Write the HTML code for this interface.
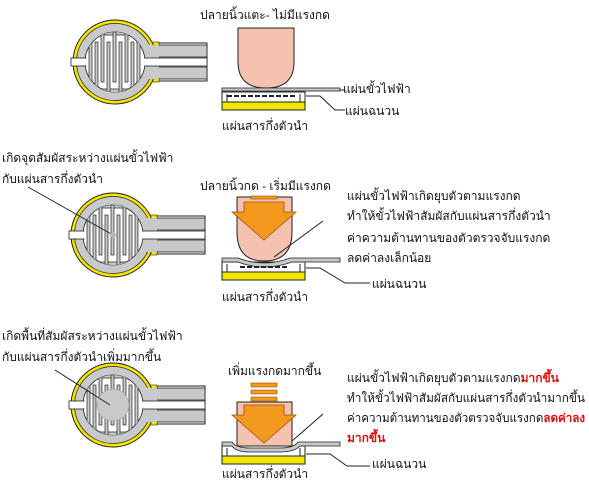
<!DOCTYPE html>
<html><head><meta charset="utf-8"><style>
body{margin:0;background:#fff;width:589px;height:480px;overflow:hidden}
text{font-family:"Liberation Sans","DejaVu Sans",sans-serif;font-size:12px;fill:#111}
</style></head><body>
<svg width="589" height="480" viewBox="0 0 589 480">
<defs>
<clipPath id="ic"><circle cx="0" cy="0" r="30"/></clipPath>
<g id="sensor">
  <rect x="20" y="-19" width="72" height="38" fill="#fff" stroke="#222" stroke-width="1"/>
  <rect x="20" y="-17" width="72" height="12" fill="#c8c9cb" stroke="#222" stroke-width=".8"/>
  <rect x="20" y="5" width="72" height="12" fill="#c8c9cb" stroke="#222" stroke-width=".8"/>
  <rect x="20" y="-20" width="24" height="4" fill="#f2e600" stroke="#222" stroke-width=".6"/>
  <rect x="20" y="16" width="24" height="4" fill="#f2e600" stroke="#222" stroke-width=".6"/>
  <circle r="42" fill="#f2e600" stroke="#222" stroke-width="1"/>
  <circle r="38.5" fill="#c8c9cb" stroke="#222" stroke-width=".8"/>
  <rect x="30" y="-17" width="14" height="34" fill="#c8c9cb"/>
  <circle r="30" fill="#fff" stroke="#222" stroke-width=".8"/>
  <g clip-path="url(#ic)" fill="#c8c9cb" stroke="#222" stroke-width=".7">
    <path d="M-32,-32 H32 V-27 H-32Z"/>
    <path d="M-32,32 H32 V27 H-32Z"/>
    <rect x="-26" y="-30" width="3" height="50"/>
    <rect x="-20" y="-20" width="3" height="50"/>
    <rect x="-14" y="-30" width="3" height="50"/>
    <rect x="-8" y="-20" width="3" height="50"/>
    <rect x="-2" y="-30" width="3" height="50"/>
    <rect x="4" y="-20" width="3" height="50"/>
    <rect x="10" y="-30" width="3" height="50"/>
    <rect x="16" y="-20" width="3" height="50"/>
    <rect x="22" y="-30" width="3" height="50"/>
  </g>
  <rect x="-44" y="-4" width="15" height="8" fill="#fff" stroke="#222" stroke-width=".8"/>
  <rect x="-30" y="-3.4" width="3" height="6.8" fill="#fff"/>
  <rect x="30" y="-4" width="62" height="8" fill="#fff" stroke="#222" stroke-width=".8"/>
  <rect x="28" y="-3.4" width="5" height="6.8" fill="#fff"/>
</g>
<g id="base">
  <rect x="0" y="4" width="83" height="10" fill="#fff" stroke="#222"/>
  <path d="M5,14 V6 M78,14 V6" stroke="#222"/>
  <rect x="0" y="14" width="83" height="8" fill="#f2e600" stroke="#222"/>
</g>
<g id="arrow">
  <path d="M-20,0 H20 V10 H32 L0,38 L-32,10 H-20Z" fill="#f39a1e" stroke="#9a5200" stroke-width=".8"/>
</g>
</defs>

<!-- Row 1 -->
<use href="#sensor" x="115" y="62"/>
<text x="200" y="19">ปลายนิ้วแตะ- ไม่มีแรงกด</text>
<path d="M238,28 H294 V62 Q294,88 266,88 Q238,88 238,62Z" fill="#f6c2b0" stroke="#222"/>
<use href="#base" x="222" y="88"/>
<rect x="222" y="88" width="118" height="3" fill="#c8c9cb" stroke="#222" stroke-width=".8"/>
<path d="M227,96 h70" stroke="#222" stroke-dasharray="5,2" stroke-width="2"/>
<path d="M340,90 H345" stroke="#222"/>
<text x="343" y="93">แผ่นขั้วไฟฟ้า</text>
<path d="M306,96 H320 L335,110 H345" stroke="#222" fill="none"/>
<text x="345" y="115">แผ่นฉนวน</text>
<text x="222" y="130">แผ่นสารกึ่งตัวนำ</text>

<!-- Row 2 -->
<text x="2" y="162">เกิดจุดสัมผัสระหว่างแผ่นขั้วไฟฟ้า</text>
<text x="2" y="183">กับแผ่นสารกึ่งตัวนำ</text>
<use href="#sensor" x="113" y="235"/>
<path d="M28,187 L113,235" stroke="#222"/>
<circle cx="113" cy="235" r="3" fill="#b5b6b8"/>
<text x="200" y="190">ปลายนิ้วกด - เริ่มมีแรงกด</text>
<path d="M237,197 H292 V232 Q292,261 264,261 Q237,261 237,232Z" fill="#f6c2b0" stroke="#222"/>
<rect x="251" y="196" width="26" height="3" fill="#f39a1e" stroke="#9a5200" stroke-width=".6"/>
<use href="#arrow" x="264" y="202"/>
<use href="#base" x="222" y="258"/>
<path d="M222,258 H238 Q264,268 290,258 H340 V262 H292 Q264,272 238,262 H222Z" fill="#c8c9cb" stroke="#222" stroke-width=".8"/>
<path d="M240,267 h48" stroke="#222" stroke-width="2" stroke-dasharray="5,2"/>
<path d="M323,221 L274,257" stroke="#222"/>
<path d="M306,268 H320 L345,283 H370" stroke="#222" fill="none"/>
<text x="347" y="200">แผ่นขั้วไฟฟ้าเกิดยุบตัวตามแรงกด</text>
<text x="347" y="220">ทำให้ขั้วไฟฟ้าสัมผัสกับแผ่นสารกึ่งตัวนำ</text>
<text x="347" y="242">ค่าความต้านทานของตัวตรวจจับแรงกด</text>
<text x="347" y="262">ลดค่าลงเล็กน้อย</text>
<text x="372" y="288">แผ่นฉนวน</text>
<text x="222" y="301">แผ่นสารกึ่งตัวนำ</text>

<!-- Row 3 -->
<text x="2" y="340">เกิดพื้นที่สัมผัสระหว่างแผ่นขั้วไฟฟ้า</text>
<text x="2" y="361">กับแผ่นสารกึ่งตัวนำเพิ่มมากขึ้น</text>
<use href="#sensor" x="113" y="405"/>
<circle cx="113" cy="405" r="16" fill="#c8c9cb" stroke="#999" stroke-width=".5"/>
<path d="M55,370 L110,405" stroke="#222"/>
<text x="228" y="375">เพิ่มแรงกดมากขึ้น</text>
<path d="M237,402 H292 V446 H237Z" fill="#f6c2b0" stroke="#222"/>
<rect x="251" y="383" width="26" height="4" fill="#f39a1e" stroke="#9a5200" stroke-width=".6"/>
<rect x="251" y="390" width="26" height="4" fill="#f39a1e" stroke="#9a5200" stroke-width=".6"/>
<rect x="251" y="397" width="26" height="4" fill="#f39a1e" stroke="#9a5200" stroke-width=".6"/>
<use href="#arrow" x="264" y="405"/>
<use href="#base" x="222" y="442"/>
<path d="M222,442 H232 Q236,448 250,448 H280 Q294,448 298,442 H340 V446 H300 Q294,452 280,452 H250 Q236,452 232,446 H222Z" fill="#c8c9cb" stroke="#222" stroke-width=".8"/>
<path d="M323,414 L292,441" stroke="#222"/>
<path d="M306,454 H330 L347,466 H370" stroke="#222" fill="none"/>
<text x="347" y="382">แผ่นขั้วไฟฟ้าเกิดยุบตัวตามแรงกด<tspan style="fill:#e01010" font-weight="bold">มากขึ้น</tspan></text>
<text x="347" y="402" textLength="238" lengthAdjust="spacingAndGlyphs">ทำให้ขั้วไฟฟ้าสัมผัสกับแผ่นสารกึ่งตัวนำมากขึ้น</text>
<text x="347" y="422" textLength="238" lengthAdjust="spacingAndGlyphs">ค่าความต้านทานของตัวตรวจจับแรงกด<tspan style="fill:#e01010" font-weight="bold">ลดค่าลง</tspan></text>
<text x="347" y="442" font-weight="bold" style="fill:#e01010">มากขึ้น</text>
<text x="372" y="468">แผ่นฉนวน</text>
<text x="222" y="478">แผ่นสารกึ่งตัวนำ</text>
</svg>
</body></html>
